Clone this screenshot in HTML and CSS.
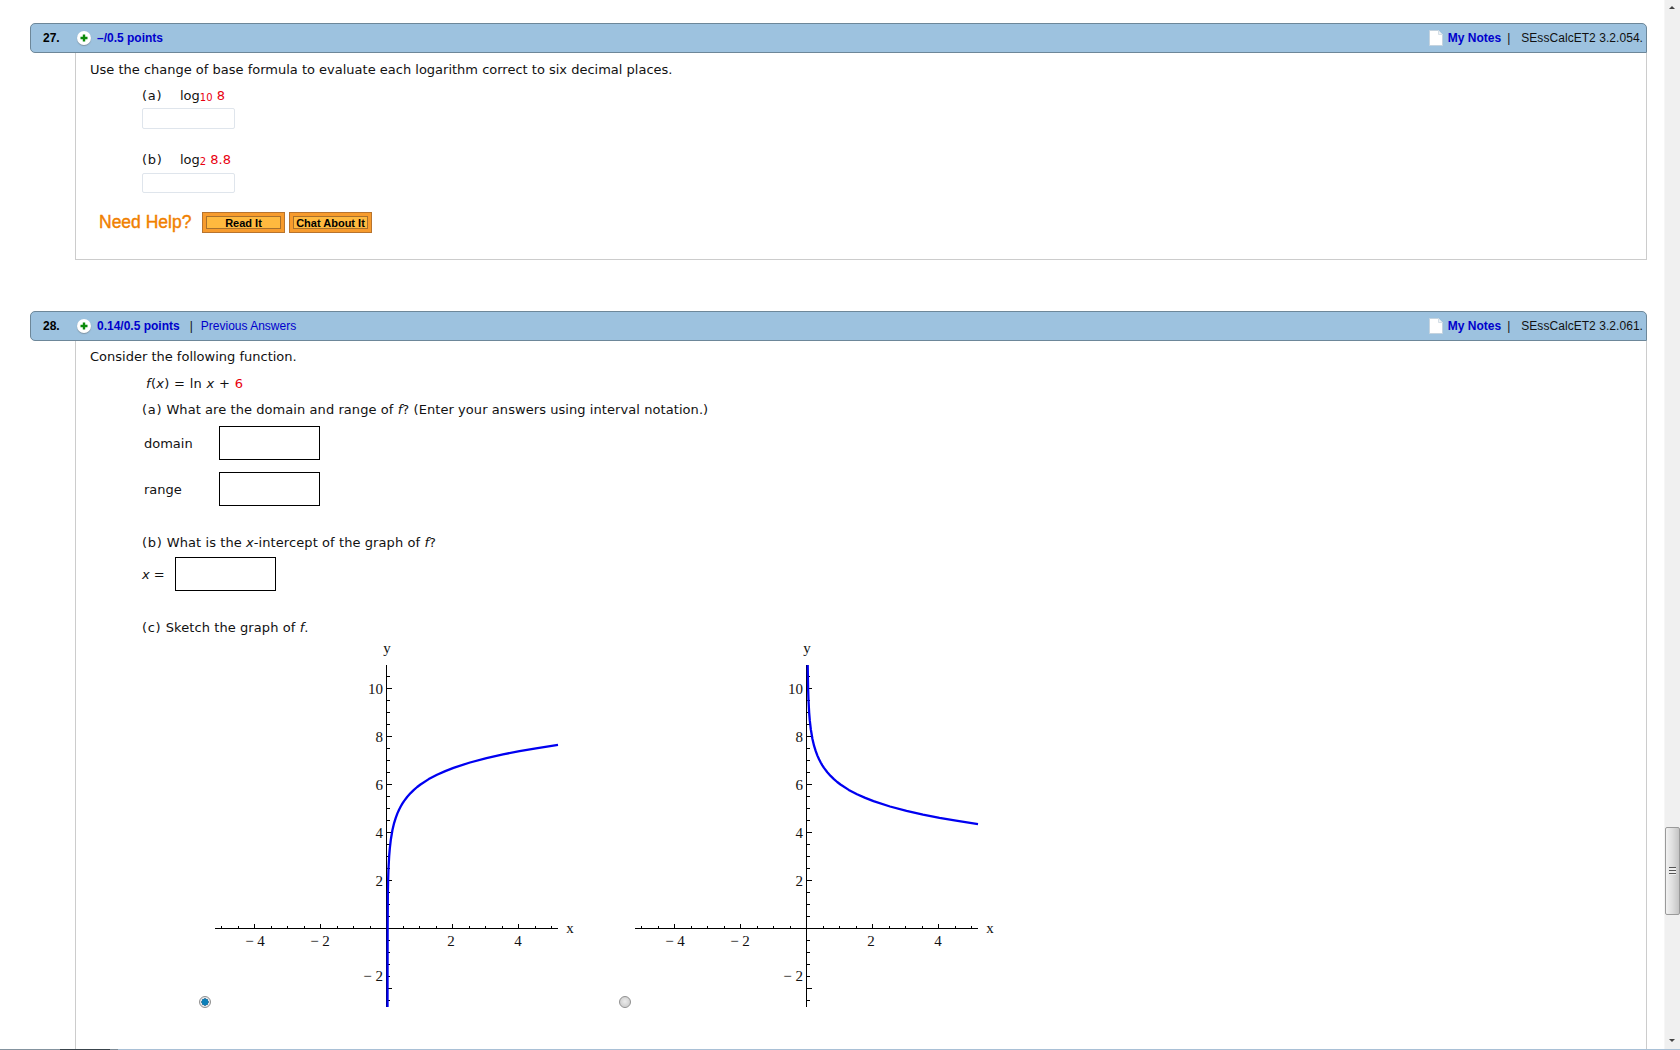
FILE: index.html
```html
<!DOCTYPE html>
<html lang="en">
<head>
<meta charset="utf-8">
<title>Assignment questions</title>
<link rel="stylesheet" href="styles.css">
</head>
<body>
<div class="screen">
  <div class="view">
    <main class="main">
      <section class="question q27">
        <header class="qhead">
          <span class="qnum">27.</span>
          <span class="plus"><svg viewBox="0 0 14 14" width="14" height="14"><path d="M7 3.5v7M3.5 7h7" stroke="#0a8a0a" stroke-width="2.4"/></svg></span>
          <a class="points">–/0.5 points</a>
          <span class="qright">
            <svg class="note" viewBox="0 0 14 16" width="14" height="16"><path d="M.5.5h9l4 4v11H.5z" fill="#fff" stroke="#c4d3df"/><path d="M9.5.5v4h4" fill="#eef2f5" stroke="#d4dfe7"/></svg>
            <a class="notes">My Notes</a>
            <span class="sep">|</span>
            <span class="code">SEssCalcET2 3.2.054.</span>
          </span>
        </header>
        <div class="qbody">
          <p class="line">Use the change of base formula to evaluate each logarithm correct to six decimal places.</p>
          <p class="line part-a"><span class="tag">(a)</span>log<sub class="red">10</sub> <span class="red">8</span></p>
          <input class="soft a" type="text">
          <p class="line part-b"><span class="tag">(b)</span>log<sub class="red">2</sub> <span class="red">8.8</span></p>
          <input class="soft b" type="text">
          <div class="help">
            <span class="help-title">Need Help?</span>
            <span class="btn read"><span>Read It</span></span>
            <span class="btn chat"><span>Chat About It</span></span>
          </div>
        </div>
      </section>

      <section class="question q28">
        <header class="qhead">
          <span class="qnum">28.</span>
          <span class="plus"><svg viewBox="0 0 14 14" width="14" height="14"><path d="M7 3.5v7M3.5 7h7" stroke="#0a8a0a" stroke-width="2.4"/></svg></span>
          <a class="points">0.14/0.5 points</a>
          <span class="sep prev-sep">|</span>
          <a class="prev">Previous Answers</a>
          <span class="qright">
            <svg class="note" viewBox="0 0 14 16" width="14" height="16"><path d="M.5.5h9l4 4v11H.5z" fill="#fff" stroke="#c4d3df"/><path d="M9.5.5v4h4" fill="#eef2f5" stroke="#d4dfe7"/></svg>
            <a class="notes">My Notes</a>
            <span class="sep">|</span>
            <span class="code">SEssCalcET2 3.2.061.</span>
          </span>
        </header>
        <div class="qbody open">
          <p class="line">Consider the following function.</p>
          <p class="line formula"><i>f</i>(<i>x</i>) = ln <i>x</i> + <span class="red">6</span></p>
          <p class="line sub-a"><span class="lbl">(a)</span> What are the domain and range of <i>f</i>? (Enter your answers using interval notation.)</p>
          <div class="field first"><label class="flabel">domain</label><input class="box" type="text"></div>
          <div class="field second"><label class="flabel">range</label><input class="box" type="text"></div>
          <p class="line sub-b"><span class="lbl">(b)</span> What is the <i>x</i>-intercept of the graph of <i>f</i>?</p>
          <div class="field xrow"><label class="xlabel"><i>x</i> =</label><input class="box" type="text"></div>
          <p class="line sub-c"><span class="lbl">(c)</span> Sketch the graph of <i>f</i>.</p>
          <div class="graphs">
            <div class="graph">
              <svg class="plot" viewBox="0 0 420 412" width="420" height="412">
                <path class="axis" d="M25 291.5H368M196.5 28V370"/>
                <path class="axis" d="M31.5 288.5v3M48 288.5v3M81 288.5v3M97.5 288.5v3M114 288.5v3M147 288.5v3M163.5 288.5v3M180 288.5v3M213 288.5v3M229.5 288.5v3M246 288.5v3M279 288.5v3M295.5 288.5v3M312 288.5v3M345 288.5v3M361.5 288.5v3M64.5 286.5v5M130.5 286.5v5M262.5 286.5v5M328.5 286.5v5"/>
                <path class="axis" d="M196.5 363.5h3M196.5 339.5h3M196.5 327.5h3M196.5 315.5h3M196.5 303.5h3M196.5 279.5h3M196.5 267.5h3M196.5 255.5h3M196.5 231.5h3M196.5 219.5h3M196.5 207.5h3M196.5 183.5h3M196.5 171.5h3M196.5 159.5h3M196.5 135.5h3M196.5 123.5h3M196.5 111.5h3M196.5 87.5h3M196.5 75.5h3M196.5 63.5h3M196.5 39.5h3M196.5 351.5h5M196.5 243.5h5M196.5 195.5h5M196.5 147.5h5M196.5 99.5h5M196.5 51.5h5"/>
                <path class="curve" d="M197.5 370L197.6 296.6 197.83 258 198.16 241.4 198.49 231.7 199.15 219.4 199.81 211.3 200.8 202.8 202.45 193 204.1 186.1 205.75 180.8 207.4 176.4 209.05 172.7 210.7 169.5 212.35 166.7 214 164.1 217.3 159.8 220.6 156.1 223.9 152.9 227.2 150 230.5 147.5 238.75 142.1 247 137.8 255.25 134.1 263.5 130.9 280 125.5 296.5 121.1 313 117.4 329.5 114.2 346 111.4 368 107.9"/>
                <text class="tick end" x="193" y="57">10</text>
                <text class="tick end" x="193" y="105">8</text>
                <text class="tick end" x="193" y="153">6</text>
                <text class="tick end" x="193" y="201">4</text>
                <text class="tick end" x="193" y="249">2</text>
                <text class="tick end" x="193" y="344">− 2</text>
                <text class="tick mid" x="65" y="309">− 4</text>
                <text class="tick mid" x="130" y="309">− 2</text>
                <text class="tick mid" x="261" y="309">2</text>
                <text class="tick mid" x="328" y="309">4</text>
                <text class="tick mid" x="380" y="296">x</text>
                <text class="tick mid" x="197" y="16">y</text>
              </svg>
              <span class="radio on"></span>
            </div>
            <div class="graph">
              <svg class="plot" viewBox="0 0 420 412" width="420" height="412">
                <path class="axis" d="M25 291.5H368M196.5 28V370"/>
                <path class="axis" d="M31.5 288.5v3M48 288.5v3M81 288.5v3M97.5 288.5v3M114 288.5v3M147 288.5v3M163.5 288.5v3M180 288.5v3M213 288.5v3M229.5 288.5v3M246 288.5v3M279 288.5v3M295.5 288.5v3M312 288.5v3M345 288.5v3M361.5 288.5v3M64.5 286.5v5M130.5 286.5v5M262.5 286.5v5M328.5 286.5v5"/>
                <path class="axis" d="M196.5 363.5h3M196.5 339.5h3M196.5 327.5h3M196.5 315.5h3M196.5 303.5h3M196.5 279.5h3M196.5 267.5h3M196.5 255.5h3M196.5 231.5h3M196.5 219.5h3M196.5 207.5h3M196.5 183.5h3M196.5 171.5h3M196.5 159.5h3M196.5 135.5h3M196.5 123.5h3M196.5 111.5h3M196.5 87.5h3M196.5 75.5h3M196.5 63.5h3M196.5 39.5h3M196.5 351.5h5M196.5 243.5h5M196.5 195.5h5M196.5 147.5h5M196.5 99.5h5M196.5 51.5h5"/>
                <path class="curve" d="M197.7 28L197.83 37 198.16 53.6 198.49 63.3 199.15 75.6 199.81 83.7 200.8 92.2 202.45 102 204.1 108.9 205.75 114.2 207.4 118.6 209.05 122.3 210.7 125.5 212.35 128.3 214 130.9 217.3 135.2 220.6 138.9 223.9 142.1 227.2 145 230.5 147.5 238.75 152.9 247 157.2 255.25 160.9 263.5 164.1 280 169.5 296.5 173.9 313 177.6 329.5 180.8 346 183.6 368 187.1"/>
                <text class="tick end" x="193" y="57">10</text>
                <text class="tick end" x="193" y="105">8</text>
                <text class="tick end" x="193" y="153">6</text>
                <text class="tick end" x="193" y="201">4</text>
                <text class="tick end" x="193" y="249">2</text>
                <text class="tick end" x="193" y="344">− 2</text>
                <text class="tick mid" x="65" y="309">− 4</text>
                <text class="tick mid" x="130" y="309">− 2</text>
                <text class="tick mid" x="261" y="309">2</text>
                <text class="tick mid" x="328" y="309">4</text>
                <text class="tick mid" x="380" y="296">x</text>
                <text class="tick mid" x="197" y="16">y</text>
              </svg>
              <span class="radio"></span>
            </div>
          </div>
        </div>
      </section>
    </main>
    <aside class="scrollbar">
      <span class="arrow up"></span>
      <span class="thumb"><span class="grip"></span></span>
      <span class="arrow down"></span>
    </aside>
  </div>
  <div class="edge"></div>
</div>
</body>
</html>
```

FILE: styles.css
```css
* { box-sizing: border-box; }
html, body { margin: 0; padding: 0; height: 100%; overflow: hidden; background: #fff; }
body { font-family: "DejaVu Sans", Verdana, sans-serif; font-size: 13px; color: #111; }
.screen { height: 1050px; display: flex; flex-direction: column; }
.view { height: 1049px; display: flex; overflow: hidden; }
.edge { height: 1px; background: linear-gradient(to right, #84939f 0 60px, #39444c 60px 110px, #7d8b96 110px 118px, #a9c0d6 118px); }

.main { flex: 1; min-width: 0; padding: 23px 17px 0 30px; overflow: hidden; }
.question.q27 { margin-bottom: 51px; }

.qhead {
  height: 30px; display: flex; align-items: center;
  padding: 0 3px 0 12px;
  background: #9dc2df;
  border: 1px solid #6d8799;
  border-radius: 5px 5px 0 5px;
  font-family: "Liberation Sans", Arial, sans-serif;
  font-size: 12px;
}
.qnum { width: 34px; font-weight: 700; color: #000; }
.plus {
  width: 14px; height: 14px; border-radius: 50%;
  background: #fff; box-shadow: 0 1px 1px #7f94a5;
  display: flex;
}
.points { margin-left: 6px; font-weight: 700; color: #0000cc; }
.prev-sep { margin-left: 10px; }
.prev { margin-left: 8px; color: #0000cc; }
.sep { color: #111; }
.qright { margin-left: auto; display: flex; align-items: center; }
.note { margin-right: 5px; }
.notes { font-weight: 700; color: #0000cc; }
.qright .sep { margin: 0 11px 0 6px; }
.code { color: #111; letter-spacing: .05px; }

.qbody {
  margin-left: 45px;
  border: solid #ccc;
  border-width: 0 1px 1px 1px;
  padding: 7px 0 26px 14px;
}
.qbody.open { border-bottom: 0; padding-top: 6px; padding-bottom: 0; height: 708px; overflow: hidden; }
.line { margin: 0; line-height: 20px; white-space: nowrap; }
.red { color: #e8000f; }
sub { font-size: 10px; line-height: 0; vertical-align: -1px; }
.tag { display: inline-block; width: 38px; letter-spacing: .7px; }
.lbl { letter-spacing: .7px; }

.part-a { margin: 6px 0 0 52px; }
.part-b { margin: 21px 0 0 52px; }
.soft {
  display: block; margin: 2px 0 0 52px; width: 93px; height: 21px; padding: 0;
  border: 1px solid #dfe5ec; border-radius: 2px; background: #fff;
}
.soft.b { margin-top: 3px; height: 20px; }

.help { display: flex; align-items: center; margin: 19px 0 0 9px; height: 21px; font-family: "Liberation Sans", Arial, sans-serif; }
.help-title { width: 103px; font-size: 17.5px; color: #f08000; -webkit-text-stroke: .4px #f08000; }
.btn {
  display: flex; height: 21px; padding: 3px;
  background: #f79b2d; border: 1px solid #b8742e;
  font-size: 11px; font-weight: 700; color: #000;
}
.btn span {
  flex: 1; display: flex; align-items: center; justify-content: center;
  background: #ffb93f; border: 1px solid #a8702c;
}
.btn.read { width: 83px; margin-right: 4px; }
.btn.chat { width: 83px; }

.formula { margin: 7px 0 0 56px; letter-spacing: .3px; }
.sub-a { margin: 6px 0 0 52px; letter-spacing: .07px; }
.field { display: flex; align-items: center; height: 34px; margin-left: 52px; }
.field.first { margin-top: 6px; }
.field.second { margin-top: 12px; }
.flabel { width: 77px; padding-left: 2px; }
.xlabel { width: 33px; }
.box { width: 101px; height: 34px; padding: 0; border: 1px solid #000; background: #fff; }
.sub-b { margin: 27px 0 0 52px; letter-spacing: .085px; }
.field.xrow { margin-top: 4px; }
.sub-c { margin: 27px 0 0 52px; letter-spacing: .09px; }

.graphs { display: flex; margin: -1px 0 0 100px; }
.graph { position: relative; width: 420px; height: 412px; }
.plot { display: block; }
.axis { fill: none; stroke: #000; stroke-width: 1; shape-rendering: crispEdges; }
.curve { fill: none; stroke: #0000f0; stroke-width: 2.3; stroke-linejoin: round; }
.tick { font-family: "Liberation Serif", "Times New Roman", serif; font-size: 15px; fill: #111; }
.tick.end { text-anchor: end; }
.tick.mid { text-anchor: middle; }
.radio {
  position: absolute; left: 9px; top: 359px;
  width: 12px; height: 12px; border-radius: 50%;
  border: 1px solid #8f8f8f;
  background: radial-gradient(circle at 50% 45%, #ececec, #d2d2d2 65%, #f4f4f4);
}
.radio.on {
  background: radial-gradient(circle at 50% 50%, #0c7fb8 0 3px, #0b4f78 3.4px, #e4e8ec 3.8px);
}

.scrollbar { width: 16px; position: relative; display: flex; flex-direction: column; align-items: center; background: #f0f0f0; border-left: 1px solid #f6f6f6; }
.arrow { width: 0; height: 0; border-left: 3px solid transparent; border-right: 3px solid transparent; position: absolute; left: 4px; }
.arrow.up { top: 6px; border-bottom: 3px solid #444; }
.arrow.down { bottom: 7px; border-top: 3px solid #444; }
.thumb {
  margin-top: 827px; width: 15px; height: 88px;
  border: 1px solid #9a9a9a; border-radius: 2px;
  background: linear-gradient(to right, #f2f2f2, #dedede 50%, #c4c4c4);
  display: flex; align-items: center; justify-content: center;
}
.grip { width: 7px; height: 8px; background: repeating-linear-gradient(to bottom, #555 0 1px, #eee 1px 3px); margin-bottom: 0; }
```
